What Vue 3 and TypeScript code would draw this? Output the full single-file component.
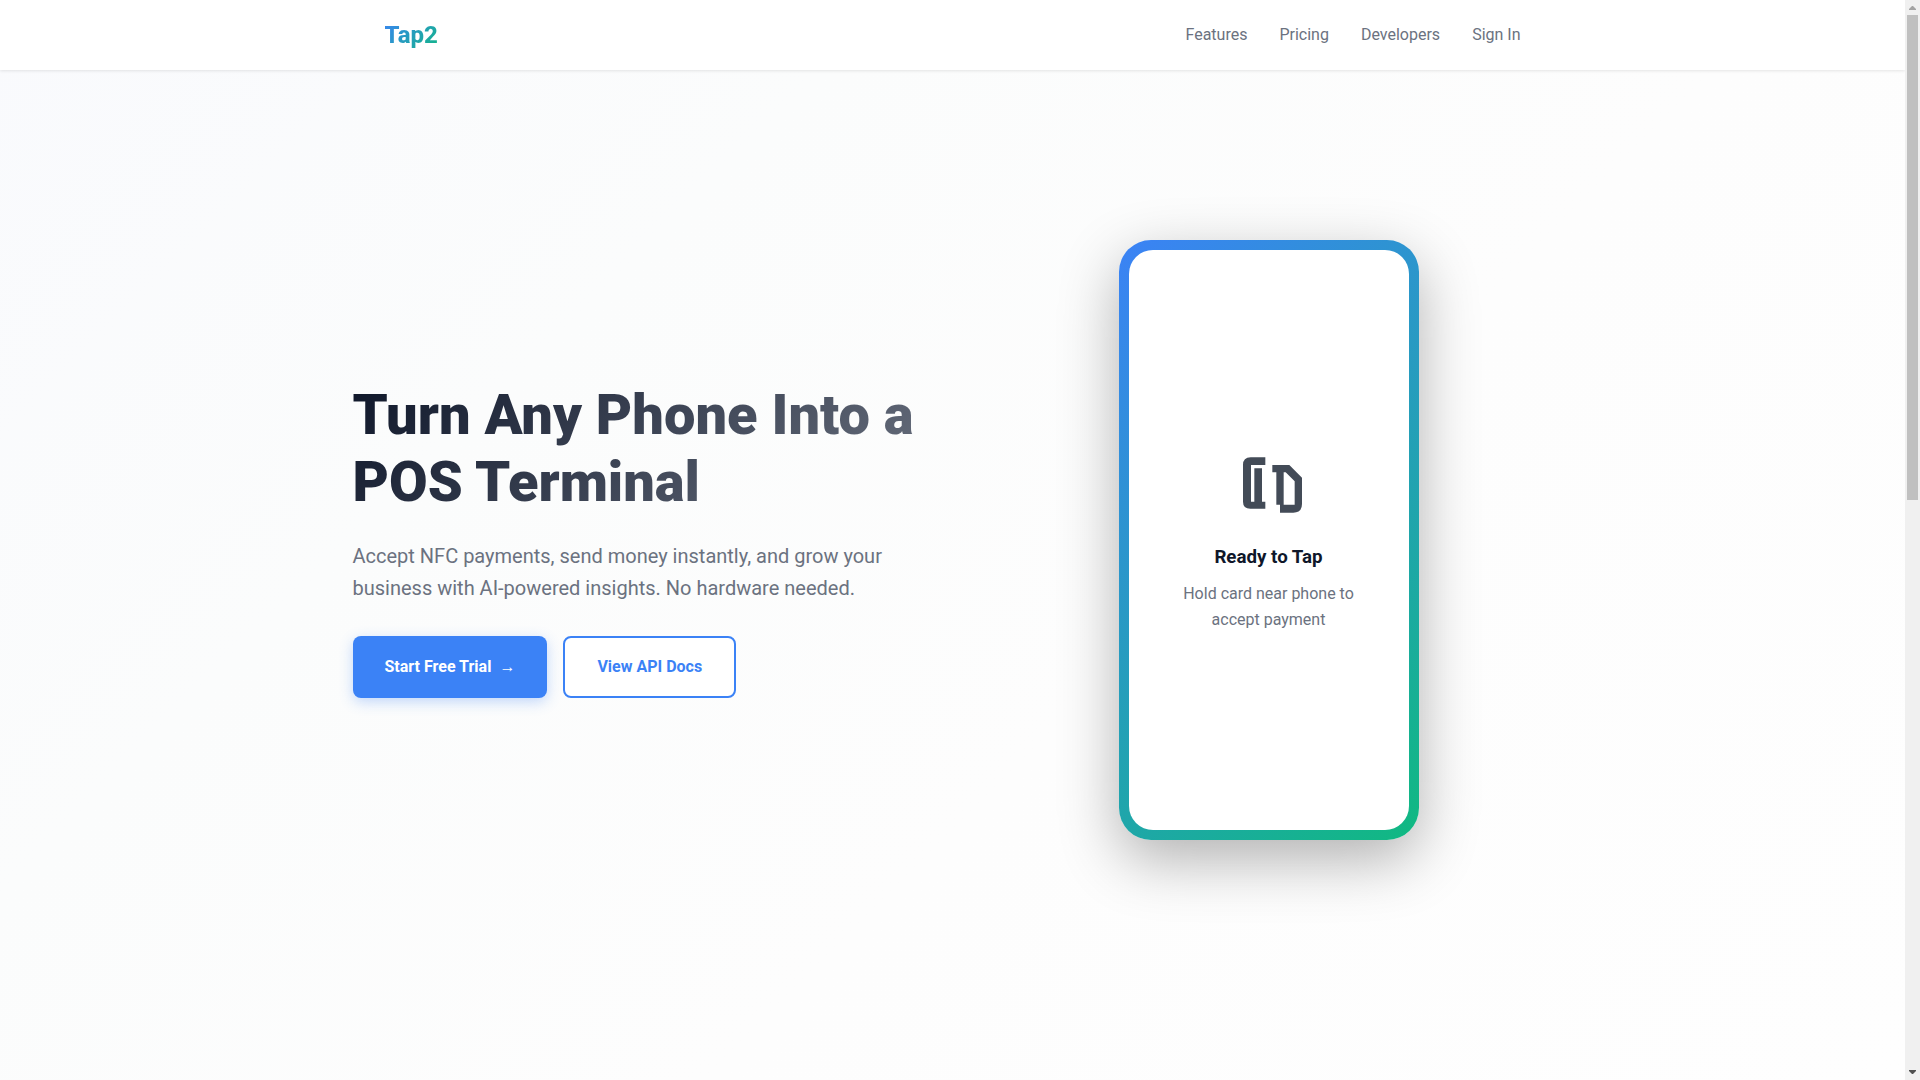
<script setup lang="ts">
interface NavLink {
  label: string
  href: string
}

const links: NavLink[] = [
  { label: 'Features', href: '#features' },
  { label: 'Pricing', href: '#pricing' },
  { label: 'Developers', href: '#developers' },
  { label: 'Sign In', href: '#signin' },
]
</script>

<template>
  <div class="window">
    <div class="page">
      <header class="topbar">
        <nav class="nav">
          <a class="logo" href="#home">Tap2</a>
          <ul class="links">
            <li v-for="link in links" :key="link.label">
              <a :href="link.href">{{ link.label }}</a>
            </li>
          </ul>
        </nav>
      </header>

      <main class="hero">
        <div class="hero-grid">
          <section class="copy">
            <h1>Turn Any Phone Into a POS Terminal</h1>
            <p>
              Accept NFC payments, send money instantly, and grow your business with
              AI-powered insights. No hardware needed.
            </p>
            <div class="actions">
              <button type="button" class="btn primary">
                <span>Start Free Trial</span>
                <span>→</span>
              </button>
              <button type="button" class="btn secondary">View API Docs</button>
            </div>
          </section>

          <section class="visual">
            <div class="phone">
              <div class="screen">
                <svg class="tap-icon" viewBox="39 22 216 234" aria-hidden="true">
                  <path
                    d="M136 53H92Q69 53 69 76V186Q69 207 91 207H136V186H126V86H103V186H93V76H136Z"
                  />
                  <path
                    fill-rule="evenodd"
                    d="M157 76H208L246 114V193Q246 219 220 219H180V195H169V98H157ZM191 98H197L224 125V195H191Z"
                  />
                </svg>
                <h3>Ready to Tap</h3>
                <p>Hold card near phone to accept payment</p>
              </div>
            </div>
          </section>
        </div>
      </main>
    </div>

    <div class="scrollbar" aria-hidden="true">
      <svg class="arrow" viewBox="0 0 15 15"><path fill="#a3a3a3" d="M4 10V9L7 6H8L11 9V10Z" /></svg>
      <div class="track"><div class="thumb"></div></div>
      <svg class="arrow" viewBox="0 0 15 15"><path fill="#505050" d="M4 5V6L7 9H8L11 6V5Z" /></svg>
    </div>
  </div>
</template>

<style>
body {
  margin: 0;
  background: #fdfdfd;
}
</style>

<style scoped>
.window {
  display: flex;
  font-family: Roboto, sans-serif;
  font-size: 16px;
  line-height: 26px;
  color: #0f172a;
}

.page {
  flex: 1;
  min-width: 0;
  min-height: 100vh;
  display: flex;
  flex-direction: column;
  background: linear-gradient(135deg, #f9fafd 0%, #fbfcfc 30%, #fdfdfd 60%, #fefefe 100%);
}

.topbar {
  background: #fff;
  box-shadow: 0 1px 3px rgba(0, 0, 0, 0.1);
}

.nav {
  box-sizing: border-box;
  max-width: 1200px;
  height: 70px;
  margin: 0 auto;
  padding: 0 32px;
  display: flex;
  align-items: center;
  justify-content: space-between;
}

.logo {
  font-size: 24px;
  line-height: 38px;
  font-weight: 800;
  text-decoration: none;
  color: transparent;
  background: linear-gradient(135deg, #3b82f6, #10b981);
  background-clip: text;
  -webkit-background-clip: text;
}

.links {
  display: flex;
  gap: 32px;
  margin: 0;
  padding: 0;
  list-style: none;
}

.links a {
  color: #6b7280;
  text-decoration: none;
}

.hero {
  flex: 1;
  display: flex;
  align-items: center;
  justify-content: center;
  padding-bottom: 70px;
}

.hero-grid {
  width: 100%;
  max-width: 1200px;
  display: grid;
  grid-template-columns: 1fr 1fr;
  gap: 64px;
  align-items: center;
}

h1 {
  margin: 0 0 24px;
  font-size: 56px;
  line-height: 67px;
  font-weight: 900;
  color: transparent;
  background: linear-gradient(135deg, #0f172a, #6b7280);
  background-clip: text;
  -webkit-background-clip: text;
}

.copy p {
  margin: 0 0 32px;
  font-size: 20px;
  line-height: 32px;
  color: #6b7280;
}

.actions {
  display: flex;
  gap: 16px;
}

.btn {
  display: flex;
  align-items: center;
  gap: 8px;
  padding: 16px 32px;
  border-radius: 8px;
  font: inherit;
  font-weight: 700;
  cursor: pointer;
}

.primary {
  border: 0;
  color: #fff;
  background: #3b82f6;
  box-shadow: 0 4px 14px rgba(59, 130, 246, 0.3);
}

.secondary {
  border: 2px solid #3b82f6;
  color: #3b82f6;
  background: #fff;
}

.visual {
  display: flex;
  justify-content: center;
}

.phone {
  box-sizing: border-box;
  width: 300px;
  height: 600px;
  padding: 10px;
  display: flex;
  border-radius: 32px;
  background: linear-gradient(135deg, #3b82f6, #10b981);
  box-shadow: 0 20px 60px rgba(0, 0, 0, 0.3);
}

.screen {
  flex: 1;
  display: flex;
  flex-direction: column;
  align-items: center;
  justify-content: center;
  padding: 0 32px;
  border-radius: 24px;
  background: #fff;
  text-align: center;
}

.tap-icon {
  width: 72px;
  height: 78px;
  margin-bottom: 16px;
  fill: #434b57;
}

h3 {
  margin: 0 0 8px;
  line-height: 32px;
}

.screen p {
  margin: 0;
  color: #6b7280;
}

.scrollbar {
  position: sticky;
  top: 0;
  width: 15px;
  height: 100vh;
  display: flex;
  flex-direction: column;
  background: #f0f0f0;
}

.arrow {
  width: 15px;
  height: 15px;
}

.track {
  flex: 1;
  padding: 0 2px;
}

.thumb {
  height: 46.2%;
  background: #c0c0c0;
}
</style>
